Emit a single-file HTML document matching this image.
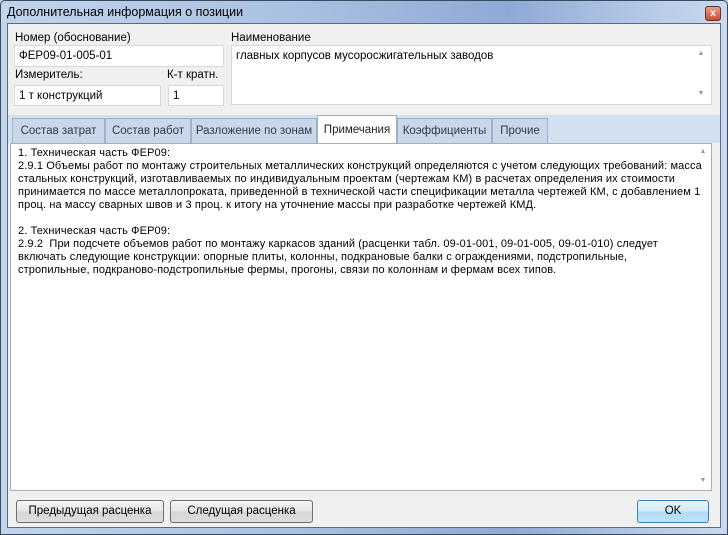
<!DOCTYPE html>
<html><head><meta charset="utf-8"><style>
*{box-sizing:border-box;margin:0;padding:0}
body{width:728px;height:535px;overflow:hidden;font-family:"Liberation Sans","DejaVu Sans",sans-serif;font-size:11.5px;color:#000;position:relative;background:#c4d6ec}
.frame{position:absolute;left:0;top:0;width:728px;height:535px;border:1px solid #3a4a5c;border-radius:5px 5px 0 0;background:linear-gradient(90deg,#c0d4ec 0%,#a9c1e2 40%,#8fa9d6 70%,#b7cbe8 90%,#c9d9ee 100%)}
.title{position:absolute;left:7px;top:5px;font-size:12.5px;color:#000}
.close{position:absolute;left:705px;top:6px;width:16px;height:15px;border:1px solid #6b3020;border-radius:3px;background:linear-gradient(#e8a090,#c84a30);color:#fff;font-size:10px;font-weight:bold;text-align:center;line-height:13px}
.client{position:absolute;left:7px;top:23px;width:714px;height:505px;background:#f0f0f0;border:1px solid #5a6a80}
.a{position:absolute}
.inp{position:absolute;background:#fff;border:1px solid #d8d8d8;padding:4px 4px;white-space:nowrap}
.tabband{position:absolute;left:8px;top:115px;width:712px;height:28px;background:#d3e0ef}
.tab{position:absolute;top:118px;height:25px;border:1px solid #9cb0c8;border-bottom:none;background:#c8d8ea;color:#333a48;padding:6px 0 0;text-align:center;font-size:11.5px}
.tab.act{top:115px;height:29px;background:#fff;color:#222;padding-top:8px}
.txt{position:absolute;left:10px;top:143px;width:702px;height:348px;overflow:hidden;background:#fff;border:1px solid #9cb0c8;padding:3px 0 0 7px;line-height:13px;white-space:pre;font-size:11px;letter-spacing:0.12px}
.sb{position:absolute;width:14px;color:#999;font-size:7px;text-align:center}
.btn{position:absolute;top:500px;height:23px;border:1px solid #707070;border-radius:3px;background:linear-gradient(#f4f4f4 0%,#e6e6e6 50%,#d6d6d6 51%,#dcdcdc 100%);text-align:center;line-height:21px;font-size:11.5px}
.ok{border-color:#3c7fb1;background:linear-gradient(#e8f5fc 0%,#d0ebfa 50%,#b0dcf5 51%,#bfe3f8 100%)}
</style></head><body>
<div class="frame"></div>
<div class="title">Дополнительная информация о позиции</div>
<div class="close">x</div>
<div class="client"></div>
<div class="a" style="left:15px;top:32px">Номер (обоснование)</div>
<div class="inp" style="left:14px;top:45px;width:210px;height:22px">ФЕР09-01-005-01</div>
<div class="a" style="left:15px;top:69px">Измеритель:</div>
<div class="a" style="left:167px;top:69px">К-т кратн.</div>
<div class="inp" style="left:14px;top:85px;width:147px;height:21px">1 т конструкций</div>
<div class="inp" style="left:168px;top:85px;width:56px;height:21px">1</div>
<div class="a" style="left:231px;top:32px">Наименование</div>
<div class="inp" style="left:231px;top:45px;width:481px;height:60px">главных корпусов мусоросжигательных заводов</div>
<div class="sb" style="left:694px;top:50px">▲</div>
<div class="sb" style="left:694px;top:90px">▼</div>
<div class="tabband"></div>
<div class="tab" style="left:12px;width:93px">Состав затрат</div>
<div class="tab" style="left:105px;width:86px">Состав работ</div>
<div class="tab" style="left:191px;width:126px">Разложение по зонам</div>
<div class="tab act" style="left:317px;width:80px">Примечания</div>
<div class="tab" style="left:397px;width:95px">Коэффициенты</div>
<div class="tab" style="left:492px;width:56px">Прочие</div>
<div class="txt">1. Техническая часть ФЕР09:
2.9.1 Объемы работ по монтажу строительных металлических конструкций определяются с учетом следующих требований: масса
стальных конструкций, изготавливаемых по индивидуальным проектам (чертежам КМ) в расчетах определения их стоимости
принимается по массе металлопроката, приведенной в технической части спецификации металла чертежей КМ, с добавлением 1
проц. на массу сварных швов и 3 проц. к итогу на уточнение массы при разработке чертежей КМД.

2. Техническая часть ФЕР09:
2.9.2  При подсчете объемов работ по монтажу каркасов зданий (расценки табл. 09-01-001, 09-01-005, 09-01-010) следует
включать следующие конструкции: опорные плиты, колонны, подкрановые балки с ограждениями, подстропильные,
стропильные, подкраново-подстропильные фермы, прогоны, связи по колоннам и фермам всех типов.</div>
<div class="sb" style="left:696px;top:148px">▲</div>
<div class="sb" style="left:696px;top:477px">▼</div>
<div class="btn" style="left:16px;width:148px">Предыдущая расценка</div>
<div class="btn" style="left:170px;width:143px">Следущая расценка</div>
<div class="btn ok" style="left:637px;width:72px">OK</div>
</body></html>
